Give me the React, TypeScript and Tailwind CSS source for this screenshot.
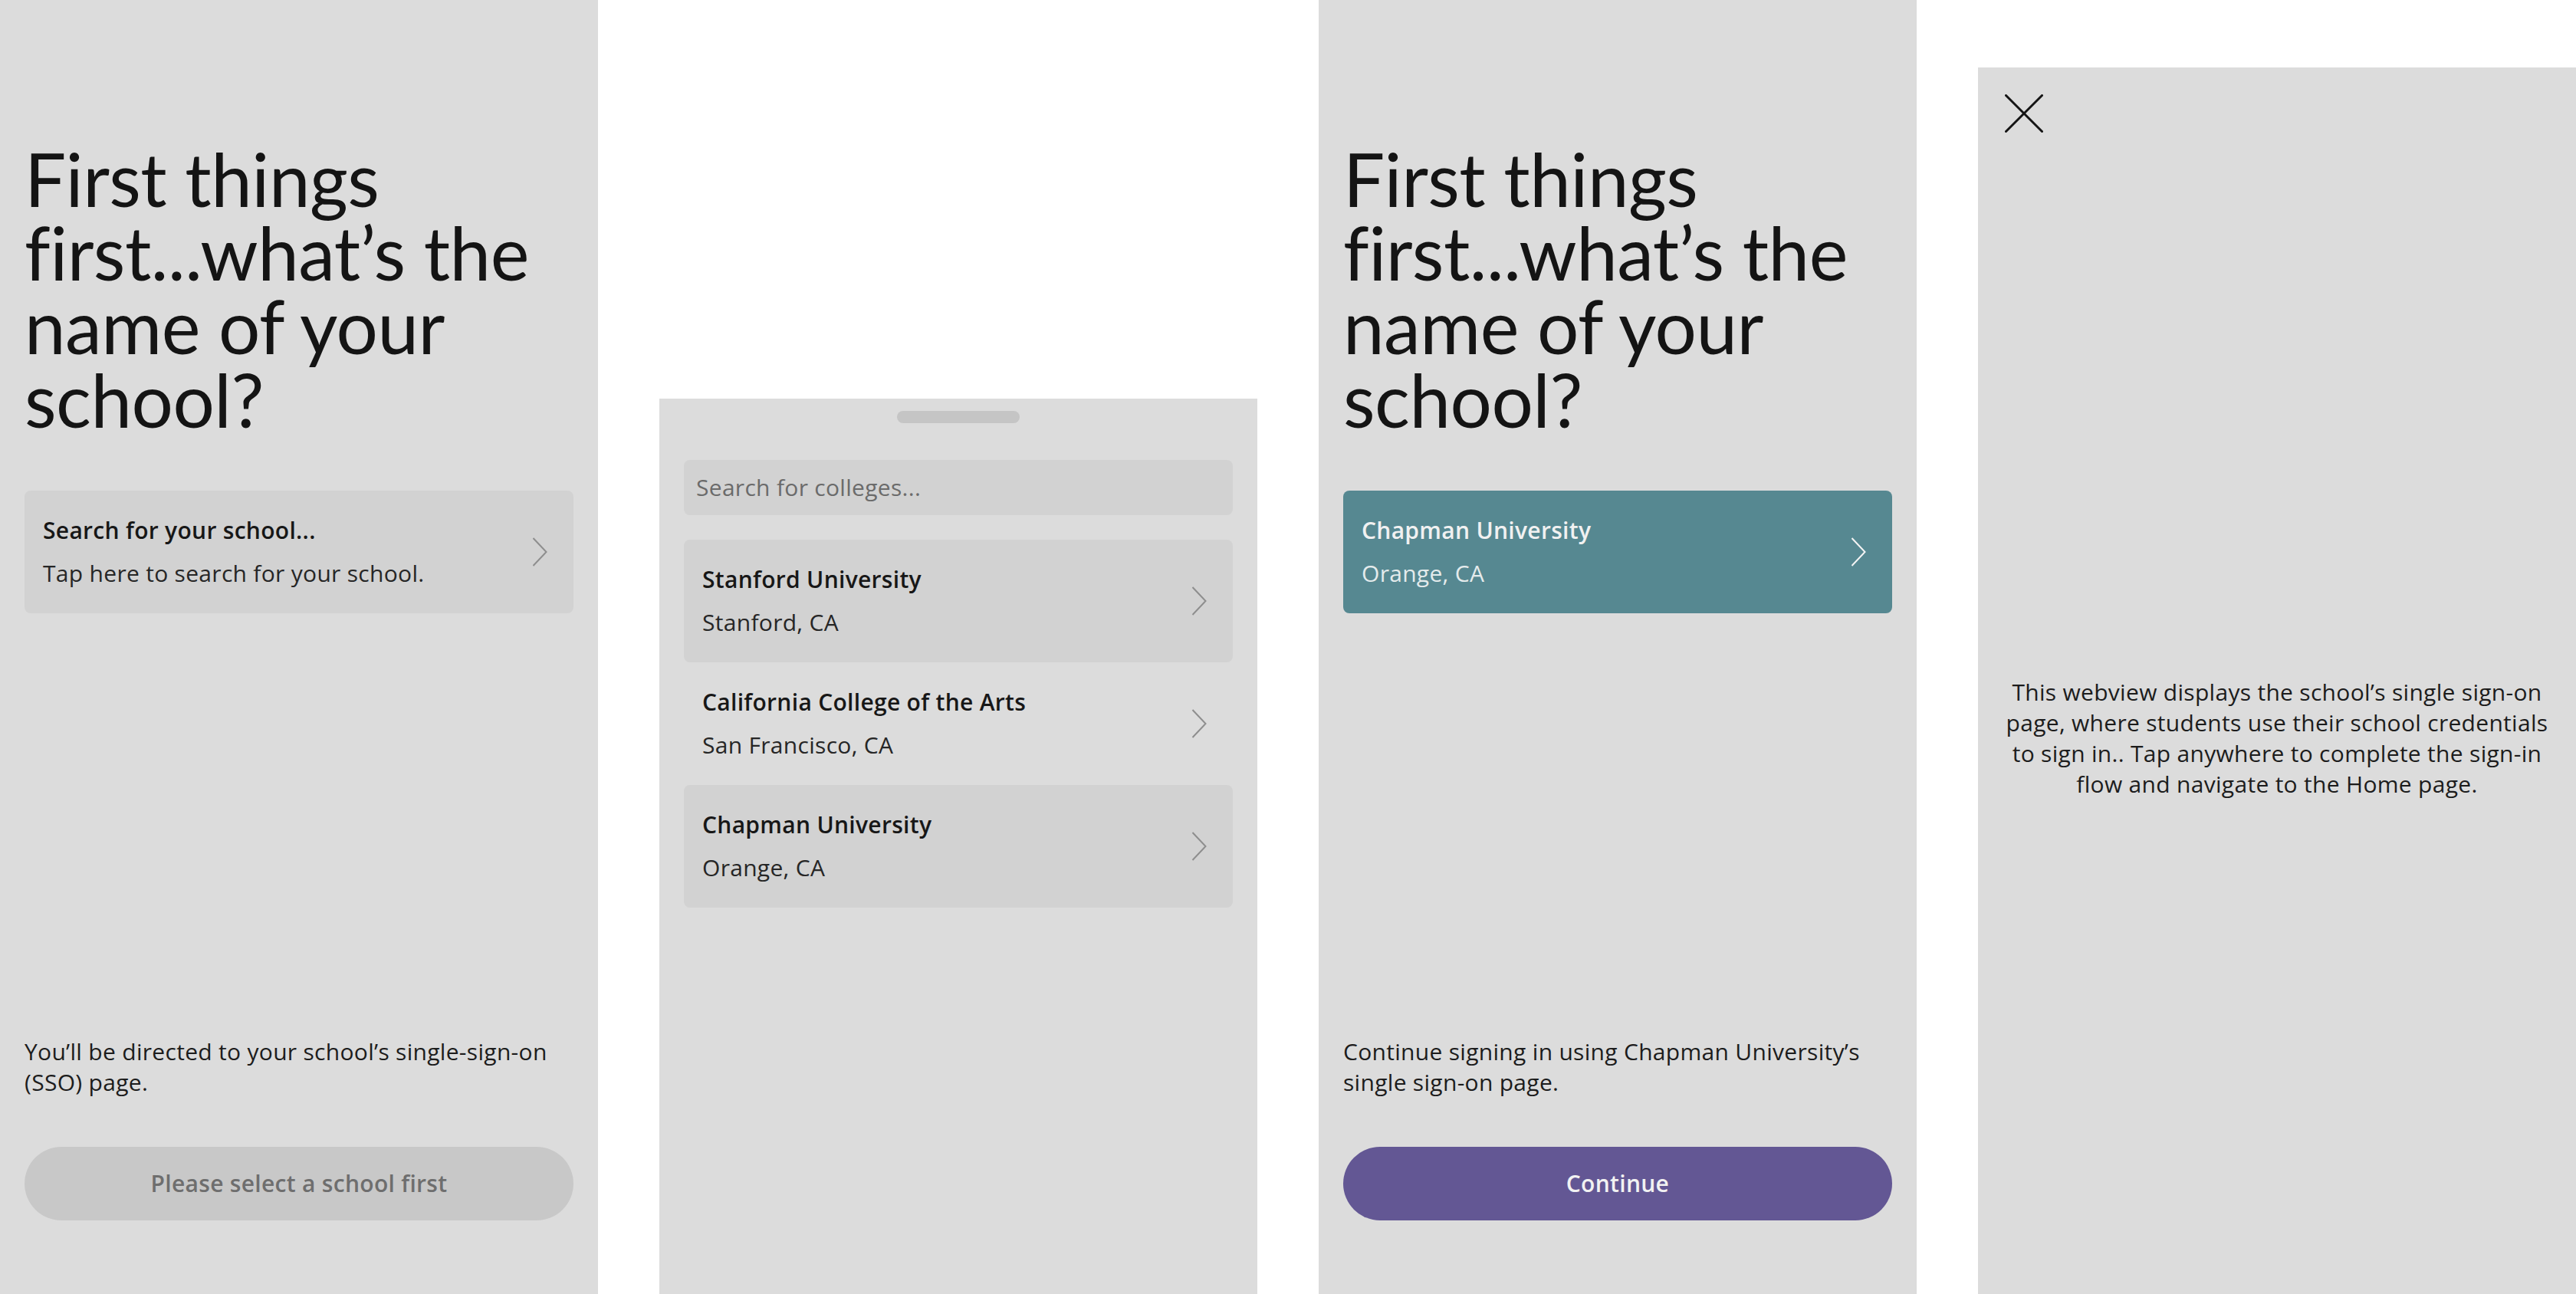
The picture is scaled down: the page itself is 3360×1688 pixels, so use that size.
import React from "react";

function Chevron({ color = "#8e8e8e" }: { color?: string }) {
  return (
    <svg width="20" height="38" viewBox="0 0 20 38" fill="none" className="shrink-0">
      <polyline points="1.5,1 18.5,19 1.5,37" stroke={color} strokeWidth="2" strokeLinejoin="miter" fill="none" />
    </svg>
  );
}

const body = "font-['Open_Sans',sans-serif] text-[30px] leading-[40px] tracking-[0.3px]";

function SchoolCard({
  title,
  subtitle,
  filled,
  selected,
}: {
  title: string;
  subtitle: string;
  filled?: boolean;
  selected?: boolean;
}) {
  const bg = selected ? "bg-[#568891]" : filled ? "bg-[#d2d2d2]" : "bg-transparent";
  return (
    <div className={`flex h-[160px] items-center justify-between rounded-[8px] pl-6 pr-[34px] ${bg}`}>
      <div className="flex flex-col gap-4">
        <div className={`${body} font-semibold ${selected ? "text-[#f1f1f1]" : "text-[#171717]"}`}>{title}</div>
        <div className={`${body} ${selected ? "text-[#e4ebec]" : "text-[#262626]"}`}>{subtitle}</div>
      </div>
      <Chevron color={selected ? "#f4f4f4" : "#8e8e8e"} />
    </div>
  );
}

function Heading() {
  return (
    <h1 className="font-['Lato',sans-serif] text-[96px] leading-[96px] font-normal tracking-[-0.5px] text-[#141414]">
      First things
      <br />
      first...what’s the
      <br />
      name of your
      <br />
      school?
    </h1>
  );
}

export default function App() {
  return (
    <div className="flex h-[1688px] w-[3360px] items-end gap-20 bg-white">
      {/* Panel 1 */}
      <div className="flex h-[1688px] w-[780px] shrink-0 flex-col bg-[#dcdcdc] px-8 pt-[185px] pb-24">
        <Heading />
        <div className="mt-[71px]">
          <div className="flex h-[160px] items-center justify-between rounded-[8px] bg-[#d2d2d2] pl-6 pr-[34px]">
            <div className="flex flex-col gap-4">
              <div className={`${body} font-semibold text-[#171717]`}>Search for your school...</div>
              <div className={`${body} text-[#262626]`}>Tap here to search for your school.</div>
            </div>
            <Chevron />
          </div>
        </div>
        <div className="flex-1" />
        <p className={`${body} whitespace-nowrap text-[#1c1c1c]`}>
          You’ll be directed to your school’s single-sign-on
          <br />
          (SSO) page.
        </p>
        <button
          className={`mt-16 flex h-24 w-full items-center justify-center rounded-full bg-[#c8c8c8] ${body} font-semibold text-[#6e6e6e]`}
        >
          Please select a school first
        </button>
      </div>

      {/* Panel 2 */}
      <div className="flex h-[1168px] w-[780px] shrink-0 flex-col bg-[#dcdcdc] px-8 pt-4">
        <div className="flex justify-center">
          <div className="h-4 w-40 rounded-full bg-[#c5c5c5]" />
        </div>
        <div className="mt-12 flex h-[72px] items-center rounded-[8px] bg-[#d2d2d2] px-4">
          <span className={`${body} text-[#6b6b6b]`}>Search for colleges...</span>
        </div>
        <div className="mt-8 flex flex-col">
          <SchoolCard title="Stanford University" subtitle="Stanford, CA" filled />
          <SchoolCard title="California College of the Arts" subtitle="San Francisco, CA" />
          <SchoolCard title="Chapman University" subtitle="Orange, CA" filled />
        </div>
      </div>

      {/* Panel 3 */}
      <div className="flex h-[1688px] w-[780px] shrink-0 flex-col bg-[#dcdcdc] px-8 pt-[185px] pb-24">
        <Heading />
        <div className="mt-[71px]">
          <SchoolCard title="Chapman University" subtitle="Orange, CA" selected />
        </div>
        <div className="flex-1" />
        <p className={`${body} whitespace-nowrap text-[#1c1c1c]`}>
          Continue signing in using Chapman University’s
          <br />
          single sign-on page.
        </p>
        <button
          className={`mt-16 flex h-24 w-full items-center justify-center rounded-full bg-[#635794] ${body} font-semibold text-[#f2f2f2]`}
        >
          Continue
        </button>
      </div>

      {/* Panel 4 */}
      <div className="flex h-[1600px] w-[780px] shrink-0 flex-col bg-[#dcdcdc]">
        <div className="h-[150px] shrink-0 pl-[35px] pt-[35px]">
          <svg width="50" height="50" viewBox="0 0 50 50" fill="none">
            <line x1="1.5" y1="1.5" x2="48.5" y2="48.5" stroke="#141414" strokeWidth="3" strokeLinecap="round" />
            <line x1="48.5" y1="1.5" x2="1.5" y2="48.5" stroke="#141414" strokeWidth="3" strokeLinecap="round" />
          </svg>
        </div>
        <div className="flex flex-1 items-center justify-center">
          <p className={`${body} whitespace-nowrap text-center text-[#1c1c1c]`}>
            This webview displays the school’s single sign-on
            <br />
            page, where students use their school credentials
            <br />
            to sign in.. Tap anywhere to complete the sign-in
            <br />
            flow and navigate to the Home page.
          </p>
        </div>
      </div>
    </div>
  );
}
